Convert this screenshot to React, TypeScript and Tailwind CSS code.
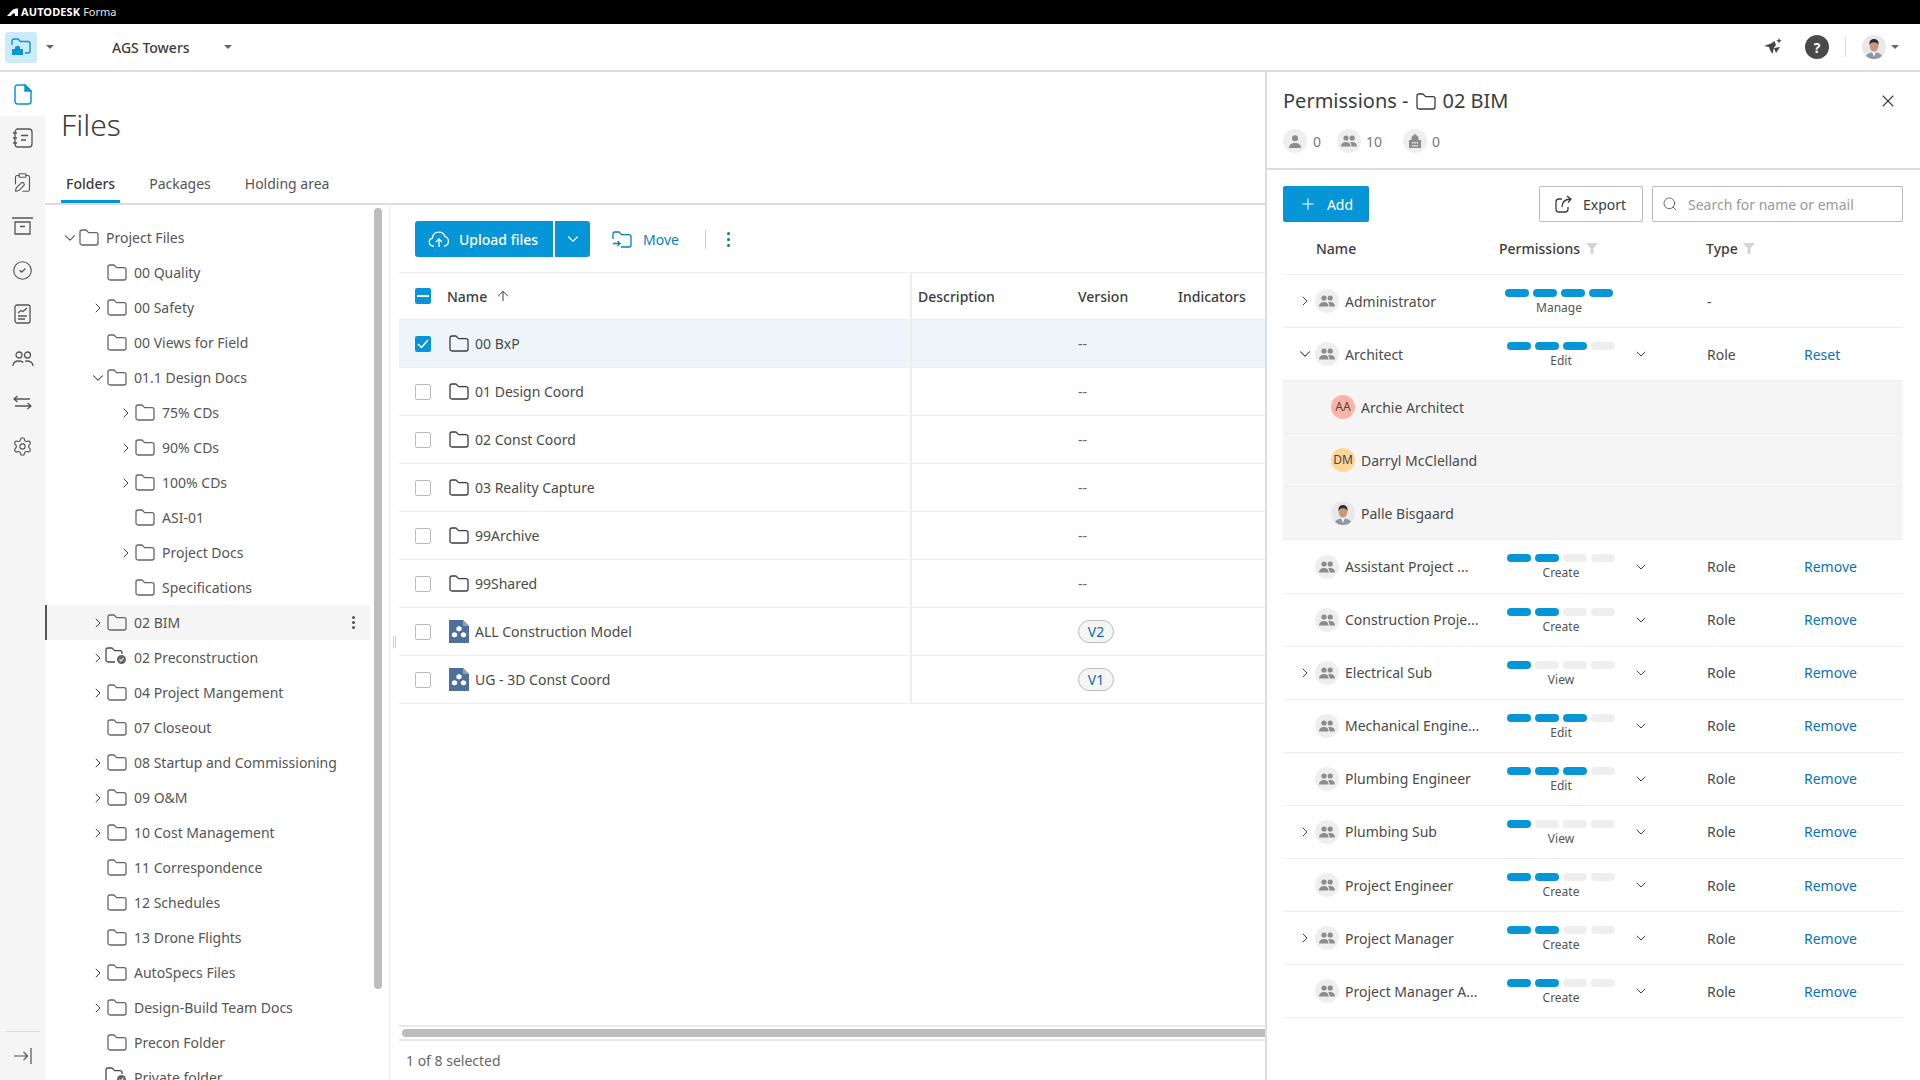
import React from 'react';
import { ChevronRight, ChevronDown, X, Search, Plus, ArrowUp, ClipboardPen, CircleCheck, Settings } from 'lucide-react';

type TreeRow = { name: string; level: number; arrow?: 'right' | 'down'; shared?: boolean; active?: boolean };

const tree: TreeRow[] = [
    { name: 'Project Files', level: 0, arrow: 'down' },
    { name: '00 Quality', level: 1 },
    { name: '00 Safety', level: 1, arrow: 'right' },
    { name: '00 Views for Field', level: 1 },
    { name: '01.1 Design Docs', level: 1, arrow: 'down' },
    { name: '75% CDs', level: 2, arrow: 'right' },
    { name: '90% CDs', level: 2, arrow: 'right' },
    { name: '100% CDs', level: 2, arrow: 'right' },
    { name: 'ASI-01', level: 2 },
    { name: 'Project Docs', level: 2, arrow: 'right' },
    { name: 'Specifications', level: 2 },
    { name: '02 BIM', level: 1, arrow: 'right', active: true },
    { name: '02 Preconstruction', level: 1, arrow: 'right', shared: true },
    { name: '04 Project Mangement', level: 1, arrow: 'right' },
    { name: '07 Closeout', level: 1 },
    { name: '08 Startup and Commissioning', level: 1, arrow: 'right' },
    { name: '09 O&M', level: 1, arrow: 'right' },
    { name: '10 Cost Management', level: 1, arrow: 'right' },
    { name: '11 Correspondence', level: 1 },
    { name: '12 Schedules', level: 1 },
    { name: '13 Drone Flights', level: 1 },
    { name: 'AutoSpecs Files', level: 1, arrow: 'right' },
    { name: 'Design-Build Team Docs', level: 1, arrow: 'right' },
    { name: 'Precon Folder', level: 1 },
    { name: 'Private folder', level: 1, shared: true },
];

const files = [
    { name: '00 BxP', selected: true },
    { name: '01 Design Coord' },
    { name: '02 Const Coord' },
    { name: '03 Reality Capture' },
    { name: '99Archive' },
    { name: '99Shared' },
    { name: 'ALL Construction Model', model: true, version: 'V2' },
    { name: 'UG - 3D Const Coord', model: true, version: 'V1' },
];

const roles = [
    { name: 'Assistant Project ...', level: 2, label: 'Create' },
    { name: 'Construction Proje...', level: 2, label: 'Create' },
    { name: 'Electrical Sub', level: 1, label: 'View', arrow: true },
    { name: 'Mechanical Engine...', level: 3, label: 'Edit' },
    { name: 'Plumbing Engineer', level: 3, label: 'Edit' },
    { name: 'Plumbing Sub', level: 1, label: 'View', arrow: true },
    { name: 'Project Engineer', level: 2, label: 'Create' },
    { name: 'Project Manager', level: 2, label: 'Create', arrow: true },
    { name: 'Project Manager A...', level: 2, label: 'Create' },
];

const FolderIcon = ({ color = '#4a4a4a' }: { color?: string }) => (
    <svg width="20" height="17" viewBox="0 0 20 17" fill="none" stroke={color} strokeWidth="1.3" className="shrink-0">
        <path d="M1 3a2 2 0 0 1 2-2h4l2.6 2.6H17a2 2 0 0 1 2 2V14a2 2 0 0 1-2 2H3a2 2 0 0 1-2-2z" strokeLinejoin="round" />
    </svg>
);

const SharedFolderIcon = () => (
    <svg width="22" height="18" viewBox="0 0 22 18" fill="none" className="shrink-0 -ml-[2px] -mt-[4px]">
        <path d="M10 15H3a2 2 0 0 1-2-2V3a2 2 0 0 1 2-2h4l2.6 2.6H15a2 2 0 0 1 2 2V7" stroke="#4a4a4a" strokeWidth="1.3" strokeLinejoin="round" />
        <circle cx="16.5" cy="12.5" r="4.5" fill="#666" />
        <path d="M14.5 12.5l1.5 1.5 2.5-3" stroke="#fff" strokeWidth="1.1" />
    </svg>
);

const ModelIcon = () => (
    <svg width="20" height="23" viewBox="0 0 20 23" className="shrink-0">
        <path d="M0 0h14l6 6v17H0z" fill="#4f7099" />
        <path d="M14 0l6 6h-6z" fill="#8ba3bf" />
        <path d="M10 6l2.6 1.4v2.8L10 11.6 7.4 10.2V7.4z M5.5 12l2.6 1.4v2.8L5.5 17.600 2.900 16.200v-2.800z M14.500 12l2.600 1.400v2.800l-2.600 1.400-2.600-1.400v-2.800z" fill="#fff" />
    </svg>
);

const GroupGlyph = () => (
    <svg width="16" height="12" viewBox="0 0 16 12" fill="#8c8c8c">
        <circle cx="5" cy="3" r="2.600" />
        <circle cx="11.200" cy="3" r="2.600" />
        <path d="M0 11.500c0-3 2-4.500 5-4.500s4.500 1.500 4.500 4.500z" />
        <path d="M10.500 11.500c0-1.800-.5-3.200-1.500-4.200.6-.2 1.300-.3 2.100-.3 3 0 4.900 1.500 4.900 4.500z" />
    </svg>
);

const GroupCircle = () => (
    <span className="w-[24px] h-[24px] rounded-full bg-[#eeeeee] flex items-center justify-center shrink-0">
        <GroupGlyph />
    </span>
);

const PhotoAvatar = ({ size }: { size: number }) => (
    <svg width={size} height={size} viewBox="0 0 24 24" className="shrink-0 rounded-full">
        <rect width="24" height="24" fill="#e6e8ec" />
        <path d="M3 24c.6-5 4-6.500 9-6.500s8.400 1.500 9 6.500z" fill="#8d97a6" />
        <path d="M10 17h4l-2 5z" fill="#f4f4f4" />
        <ellipse cx="12" cy="11" rx="4.300" ry="5.500" fill="#c99678" />
        <path d="M7.500 10c-.5-4 1.500-6 4.500-6s5 2 4.500 6c-1-2-2-2.800-4.500-2.800S8.500 8 7.500 10z" fill="#2c2a2a" />
    </svg>
);

const Bars = ({ level }: { level: number }) => (
    <div className="flex gap-[4px]">
        {[1, 2, 3, 4].map(n => (
            <span key={n} className={`w-[24px] h-[8px] rounded-full ${n <= level ? 'bg-[#0696d7]' : 'bg-[#eeeeee]'}`} />
        ))}
    </div>
);

const FunnelIcon = () => (
    <svg width="12" height="11" viewBox="0 0 12 11" fill="#d4d4d4" className="shrink-0">
        <path d="M0 0h12L7.500 5.500V11L4.500 11V5.500z" />
    </svg>
);

const PermRow = ({ name, level, label, arrow, open, action = 'Remove' }: { name: string; level: number; label: string; arrow?: boolean; open?: boolean; action?: string }) => (
    <div className="h-[53.1px] flex items-center border-b border-[#eeeeee] text-[14px] text-[#4a4a4a]">
        <div className="w-[32px] pl-[16px] flex items-center shrink-0 text-[#333]">
            {arrow && <ChevronRight size={16} strokeWidth={1.4} className="-ml-[2px]" />}
            {open && <ChevronDown size={18} strokeWidth={1.4} className="-ml-[3px]" />}
        </div>
        <GroupCircle />
        <span className="ml-[6px] w-[162px] shrink-0 whitespace-nowrap">{name}</span>
        <div className="w-[108px] h-full pt-[14px] flex flex-col items-center shrink-0">
            <Bars level={level} />
            <span className="mt-[3px] text-[12px] leading-[16px] text-[#555]">{label}</span>
        </div>
        <div className="w-[92px] pl-[18px] shrink-0 text-[#333]">
            <ChevronDown size={16} strokeWidth={1.4} />
        </div>
        <span className="w-[97px] shrink-0">Role</span>
        <span className="text-[#0a72b5]">{action}</span>
    </div>
);

const UserRow = ({ name, avatar }: { name: string; avatar: React.ReactNode }) => (
    <div className="h-[53.1px] flex items-center bg-[#f5f5f5] border-b border-[#eeeeee] pl-[48px] text-[14px] text-[#4a4a4a]">
        {avatar}
        <span className="ml-[6px]">{name}</span>
    </div>
);

const RailIcon = ({ children }: { children: React.ReactNode }) => (
    <div className="h-[44.100px] flex items-center justify-center text-[#555]">{children}</div>
);

export default function App() {
    return (
        <div className="w-[1920px] h-[1080px] overflow-hidden flex flex-col bg-white text-[#4a4a4a] font-['Noto_Sans','Open_Sans',sans-serif]">
            {/* black brand strip */}
            <div className="h-[24px] bg-black flex items-center pl-[7px] shrink-0">
                <svg width="11" height="8" viewBox="0 0 11 8" fill="#fff"><path d="M0 8 5 2.500C6.500 1 8 .5 11 .5V8H8V5.500H6L3.500 8z" /></svg>
                <span className="ml-[3px] text-[11px] font-bold text-white tracking-[0.1px]">AUTODESK</span>
                <span className="ml-[3px] text-[11px] text-[#e5e5e5]">Forma</span>
            </div>

            {/* project header */}
            <div className="h-[48px] shrink-0 border-b-2 border-[#dddddd] flex items-center pl-[5px] pr-[21px]">
                <div className="w-[32px] h-[31px] rounded-[3px] bg-[#cdeaf8] flex items-center justify-center">
                    <svg width="20" height="18" viewBox="0 0 20 18" fill="none">
                        <path d="M1 7V3a2 2 0 0 1 2-2h4l2.500 2.500H17a2 2 0 0 1 2 2V13a2 2 0 0 1-2 2h-3" stroke="#0696d7" strokeWidth="1.400" />
                        <path d="M1 17v-6h3V9l3-1.500L9 9v2h3v6z" fill="#0696d7" />
                    </svg>
                </div>
                <span className="ml-[9px] w-0 h-0 border-x-[4px] border-x-transparent border-t-[4px] border-t-[#666]" />
                <span className="ml-[58px] text-[14px] font-medium text-[#3c3c3c] w-[112px]">AGS Towers</span>
                <span className="w-0 h-0 border-x-[4px] border-x-transparent border-t-[4px] border-t-[#666]" />
                <div className="ml-auto flex items-center">
                    <svg width="18" height="18" viewBox="0 0 18 18" fill="#444">
                        <path d="M0 8 7 5.500 10.500 3 12 7 10 9.500 8.500 16 6 12 5 9z" />
                        <path d="M10 10 16 9 12 15z" />
                        <path d="M15 0l.8 2 2 .8-2 .8-.8 2-.8-2-2-.8 2-.8z" />
                    </svg>
                    <span className="ml-[23px] w-[24px] h-[24px] rounded-full bg-[#4a4a4a] text-white text-[14px] font-bold flex items-center justify-center">?</span>
                    <span className="ml-[16px] w-px h-[20px] bg-[#dddddd]" />
                    <span className="ml-[16px]"><PhotoAvatar size={24} /></span>
                    <span className="ml-[5px] w-0 h-0 border-x-[4px] border-x-transparent border-t-[4px] border-t-[#666]" />
                </div>
            </div>

            <div className="flex-1 flex min-h-0">
                {/* left rail */}
                <div className="w-[45px] shrink-0 flex flex-col">
                    <div className="h-[44px] flex items-center justify-center">
                        <svg width="18" height="21" viewBox="0 0 18 21" fill="none" stroke="#0696d7" strokeWidth="1.500">
                            <path d="M1 3.500A2.500 2.500 0 0 1 3.500 1H11l6 6v10.500a2.500 2.500 0 0 1-2.500 2.500h-11A2.500 2.500 0 0 1 1 17.500z" strokeLinejoin="round" />
                            <path d="M11 1l6 6h-6z" fill="#0696d7" />
                        </svg>
                    </div>
                    <div className="flex-1 bg-[#f5f5f5] flex flex-col">
                        <RailIcon>
                            <svg width="21" height="20" viewBox="0 0 21 20" fill="none" stroke="currentColor" strokeWidth="1.300">
                                <rect x="3" y="1" width="17" height="18" rx="3" />
                                <path d="M1 5h4M1 10h4M1 15h4M9 7.500h7M9 12h5" />
                            </svg>
                        </RailIcon>
                        <RailIcon><ClipboardPen size={21} strokeWidth={1.300} /></RailIcon>
                        <RailIcon>
                            <svg width="21" height="18" viewBox="0 0 21 18" fill="none" stroke="currentColor" strokeWidth="1.300">
                                <path d="M0 1h21M3 5h15v12H3zM8 9.500h5" />
                            </svg>
                        </RailIcon>
                        <RailIcon><CircleCheck size={21} strokeWidth={1.300} /></RailIcon>
                        <RailIcon>
                            <svg width="17" height="20" viewBox="0 0 17 20" fill="none" stroke="currentColor" strokeWidth="1.300">
                                <rect x="1" y="1" width="15" height="18" rx="2" />
                                <path d="M4 9l3-2.500 2 1L13 4M4 12h9M4 15h7" />
                            </svg>
                        </RailIcon>
                        <RailIcon>
                            <svg width="22" height="16" viewBox="0 0 22 16" fill="none" stroke="currentColor" strokeWidth="1.300">
                                <circle cx="7" cy="4" r="3" />
                                <circle cx="15.500" cy="4" r="3" />
                                <path d="M1 15c0-3.500 2.500-5 6-5 2 0 3.500.5 4.300 1.500M13 10.200c4.500-.8 8 1 8 4.800" />
                            </svg>
                        </RailIcon>
                        <RailIcon>
                            <svg width="19" height="15" viewBox="0 0 19 15" fill="none" stroke="currentColor" strokeWidth="1.300">
                                <path d="M4.500 1 1 4l3.500 3M1 4h16M14.500 8l3.500 3-3.500 3M18 11H2" />
                            </svg>
                        </RailIcon>
                        <RailIcon><Settings size={21} strokeWidth={1.300} /></RailIcon>
                        <div className="mt-auto mx-[5px] h-px bg-[#dddddd]" />
                        <div className="h-[48px] flex items-center justify-center text-[#555] mb-[0px]">
                            <svg width="18" height="16" viewBox="0 0 18 16" fill="none" stroke="currentColor" strokeWidth="1.200">
                                <path d="M0 8h13M9.500 4l4 4-4 4M17 0v16" />
                            </svg>
                        </div>
                    </div>
                </div>

                {/* files area */}
                <div className="w-[1220px] shrink-0 flex flex-col min-h-0">
                    <div className="h-[133px] shrink-0 border-b-2 border-[#dddddd] flex flex-col pl-[16px]">
                        <h1 className="mt-[32px] h-[42px] leading-[42px] text-[30px] font-light text-[#3c3c3c]">Files</h1>
                        <div className="mt-auto flex gap-[24px] text-[14px]">
                            <span className="px-[5px] pb-[5px] h-[31px] leading-[24px] font-medium text-[#3c3c3c] border-b-[3px] border-[#0696d7]">Folders</span>
                            <span className="px-[5px] leading-[24px] text-[#555]">Packages</span>
                            <span className="px-[5px] leading-[24px] text-[#555]">Holding area</span>
                        </div>
                    </div>
                    <div className="flex-1 flex min-h-0">
                        {/* folder tree */}
                        <div className="w-[325px] shrink-0 pt-[15px] overflow-hidden">
                            {tree.map(row => (
                                <div key={row.name} className={`h-[35px] flex items-center text-[14px] text-[#555] ${row.active ? 'bg-[#f5f5f5] border-l-2 border-[#555]' : ''}`}>
                                    <div className={`relative h-full shrink-0 ${row.level === 0 ? 'w-[34px]' : row.level === 1 ? 'w-[62px]' : 'w-[90px]'} ${row.active ? '-ml-[2px]' : ''}`}>
                                        {row.arrow === 'right' && <ChevronRight size={16} strokeWidth={1.400} className="absolute right-[1px] top-[10px] text-[#333]" />}
                                        {row.arrow === 'down' && <ChevronDown size={18} strokeWidth={1.400} className="absolute right-[0px] top-[9px] text-[#333]" />}
                                    </div>
                                    {row.shared ? <SharedFolderIcon /> : <FolderIcon color="#666" />}
                                    <span className={`ml-[7px] whitespace-nowrap ${row.shared ? '-ml-[0px]' : ''}`}>{row.name}</span>
                                    {row.active && (
                                        <span className="ml-auto mr-[15px] flex flex-col gap-[2px]">
                                            <i className="w-[3px] h-[3px] rounded-full bg-[#555]" />
                                            <i className="w-[3px] h-[3px] rounded-full bg-[#555]" />
                                            <i className="w-[3px] h-[3px] rounded-full bg-[#555]" />
                                        </span>
                                    )}
                                </div>
                            ))}
                        </div>
                        {/* tree scrollbar */}
                        <div className="w-[15px] shrink-0 pl-[4px] pt-[3px] border-r border-[#eeeeee] box-content">
                            <div className="w-[8px] h-[781px] rounded-full bg-[#bdbdbd]" />
                        </div>

                        {/* table */}
                        <div className="relative flex-1 min-w-0 pl-[9px] flex flex-col">
                            <div className="absolute left-[3px] top-[431px] flex gap-[1px]">
                                <i className="w-[1px] h-[12px] bg-[#cccccc]" />
                                <i className="w-[1px] h-[12px] bg-[#cccccc]" />
                            </div>
                            <div className="h-[67px] shrink-0 pt-[16px] pl-[16px] flex items-start">
                                <div className="h-[36px] w-[138px] rounded-l-[3px] bg-[#0696d7] text-white text-[14px] font-medium flex items-center pl-[13px]">
                                    <svg width="22" height="17" viewBox="0 0 22 17" fill="none" stroke="#fff" strokeWidth="1.300">
                                        <path d="M6 15H5a4 4 0 0 1-.6-7.900A6.500 6.500 0 0 1 17 5.500a5 5 0 0 1 0 9.500h-1" />
                                        <path d="M11 16V8M8 11l3-3 3 3" />
                                    </svg>
                                    <span className="ml-[9px]">Upload files</span>
                                </div>
                                <div className="ml-[2px] h-[36px] w-[35px] rounded-r-[3px] bg-[#0696d7] text-white flex items-center justify-center">
                                    <ChevronDown size={18} strokeWidth={1.500} />
                                </div>
                                <div className="ml-[22px] h-[36px] flex items-center text-[#0a7cc4] text-[14px]">
                                    <svg width="20" height="17" viewBox="0 0 20 17" fill="none" stroke="currentColor" strokeWidth="1.300">
                                        <path d="M1 8V3a2 2 0 0 1 2-2h4l2.600 2.600H17a2 2 0 0 1 2 2V14a2 2 0 0 1-2 2H9M1 12.500h7M5.500 10l2.500 2.500L5.500 15" />
                                    </svg>
                                    <span className="ml-[11px]">Move</span>
                                    <span className="ml-[26px] w-px h-[19px] bg-[#cccccc]" />
                                    <span className="ml-[21px] flex flex-col gap-[3px]">
                                        <i className="w-[3px] h-[3px] rounded-full bg-[#0a6cc0]" />
                                        <i className="w-[3px] h-[3px] rounded-full bg-[#0a6cc0]" />
                                        <i className="w-[3px] h-[3px] rounded-full bg-[#0a6cc0]" />
                                    </span>
                                </div>
                            </div>
                            {/* table header */}
                            <div className="h-[48px] shrink-0 flex border-y border-[#eeeeee] text-[14px] font-medium text-[#3c3c3c]">
                                <div className="w-[513px] shrink-0 pl-[16px] flex items-center border-r-2 border-[#eeeeee]">
                                    <span className="w-[16px] h-[16px] rounded-[2px] bg-[#0696d7] flex items-center justify-center">
                                        <i className="w-[12px] h-[2px] bg-white" />
                                    </span>
                                    <span className="ml-[16px]">Name</span>
                                    <ArrowUp size={16} strokeWidth={1.500} className="ml-[8px]" />
                                </div>
                                <div className="w-[166px] pl-[6px] shrink-0 flex items-center">Description</div>
                                <div className="w-[100px] shrink-0 flex items-center">Version</div>
                                <div className="flex items-center">Indicators</div>
                            </div>
                            {files.map(f => (
                                <div key={f.name} className={`h-[48px] shrink-0 flex border-b border-[#eeeeee] text-[14px] text-[#4a4a4a] ${f.selected ? 'bg-[#edf5fb]' : ''}`}>
                                    <div className="w-[513px] shrink-0 pl-[16px] flex items-center border-r-2 border-[#eeeeee]">
                                        {f.selected ? (
                                            <span className="w-[16px] h-[16px] rounded-[2px] bg-[#0696d7] flex items-center justify-center">
                                                <svg width="12" height="10" viewBox="0 0 12 10" fill="none" stroke="#fff" strokeWidth="1.500"><path d="M1 5l3.500 3.500L11 1" /></svg>
                                            </span>
                                        ) : (
                                            <span className="w-[16px] h-[16px] rounded-[2px] bg-white border border-[#bbbbbb]" />
                                        )}
                                        <span className="ml-[18px]">{f.model ? <ModelIcon /> : <FolderIcon color="#3c3c3c" />}</span>
                                        <span className="ml-[6px]">{f.name}</span>
                                    </div>
                                    <div className="w-[166px] shrink-0" />
                                    <div className="flex items-center">
                                        {f.version ? (
                                            <span className="w-[36px] h-[23px] rounded-full bg-[#f5f5f5] border border-[#bbbbbb] text-[#0a6cb0] flex items-center justify-center">{f.version}</span>
                                        ) : (
                                            <span className="text-[#666]">--</span>
                                        )}
                                    </div>
                                </div>
                            ))}
                            {/* bottom bar */}
                            <div className="mt-auto h-[16px] shrink-0 border-y-2 border-[#e8e8e8] pl-[3px] pt-[2px] flex">
                                <div className="flex-1 h-[8px] rounded-l-full bg-[#bdbdbd]" />
                            </div>
                            <div className="h-[39px] shrink-0 pl-[7px] flex items-center text-[14px] text-[#666]">1 of 8 selected</div>
                        </div>
                    </div>
                </div>

                {/* permissions panel */}
                <div className="flex-1 min-w-0 border-l-2 border-[#dddddd] flex flex-col">
                    <div className="h-[98px] shrink-0 border-b-2 border-[#dddddd] pl-[16px] pr-[22px] flex flex-col">
                        <div className="mt-[16px] h-[26px] flex items-center text-[20px] text-[#3c3c3c]">
                            <span>Permissions -</span>
                            <span className="ml-[7px]"><FolderIcon color="#3c3c3c" /></span>
                            <span className="ml-[7px]">02 BIM</span>
                            <X size={20} strokeWidth={1.300} className="ml-auto" />
                        </div>
                        <div className="mt-[15px] flex items-center text-[14px] text-[#777]">
                            <span className="w-[24px] h-[24px] rounded-full bg-[#eeeeee] flex items-center justify-center">
                                <svg width="12" height="13" viewBox="0 0 12 13" fill="#8c8c8c"><circle cx="6" cy="3.200" r="3" /><path d="M0 13c0-3.500 2.500-5 6-5s6 1.500 6 5z" /></svg>
                            </span>
                            <span className="ml-[6px] w-[24px]">0</span>
                            <GroupCircle />
                            <span className="ml-[5px] w-[37px]">10</span>
                            <span className="w-[24px] h-[24px] rounded-full bg-[#eeeeee] flex items-center justify-center">
                                <svg width="12" height="14" viewBox="0 0 12 14" fill="#8c8c8c"><path d="M0 14V6h2.500V3L6 0l3.500 3v3H12v8zM3 8v1.500h1.500V8zM5.300 8v1.500h1.500V8zM7.500 8v1.500H9V8zM3 11v1.500h1.500V11zM5.300 11v1.500h1.500V11zM7.500 11v1.500H9V11z" fillRule="evenodd" /></svg>
                            </span>
                            <span className="ml-[5px]">0</span>
                        </div>
                    </div>
                    <div className="pl-[16px] pr-[17px] flex flex-col">
                        <div className="mt-[16px] h-[36px] flex items-stretch">
                            <div className="w-[86px] rounded-[2px] bg-[#0696d7] text-white text-[14px] flex items-center justify-center gap-[10px]">
                                <Plus size={18} strokeWidth={1.400} />
                                <span>Add</span>
                            </div>
                            <div className="ml-auto w-[104px] rounded-[2px] border border-[#bbbbbb] text-[14px] text-[#3c3c3c] flex items-center pl-[15px]">
                                <svg width="18" height="18" viewBox="0 0 18 18" fill="none" stroke="currentColor" strokeWidth="1.300">
                                    <path d="M7 4H4a3 3 0 0 0-3 3v7a3 3 0 0 0 3 3h6a3 3 0 0 0 3-3v-2M7 12c0-5 2.500-7.500 8-8M12 1l4 3-3 3.500" />
                                </svg>
                                <span className="ml-[10px]">Export</span>
                            </div>
                            <div className="ml-[9px] w-[251px] rounded-[2px] border border-[#bbbbbb] flex items-center pl-[9px] text-[14px] text-[#999]">
                                <Search size={16} strokeWidth={1.300} className="text-[#555]" />
                                <span className="ml-[10px]">Search for name or email</span>
                            </div>
                        </div>
                        <div className="h-[53px] flex items-center border-b border-[#eeeeee] text-[14px] font-medium text-[#3c3c3c]">
                            <span className="ml-[33px] w-[183px]">Name</span>
                            <span>Permissions</span>
                            <span className="ml-[6px]"><FunnelIcon /></span>
                            <span className="ml-[108px]">Type</span>
                            <span className="ml-[5px]"><FunnelIcon /></span>
                        </div>

                        <div className="h-[53.100px] flex items-center border-b border-[#eeeeee] text-[14px] text-[#4a4a4a]">
                            <div className="w-[32px] pl-[14px] shrink-0 text-[#333]"><ChevronRight size={16} strokeWidth={1.400} /></div>
                            <GroupCircle />
                            <span className="ml-[6px] w-[162px] shrink-0">Administrator</span>
                            <div className="w-[108px] -ml-[2px] h-full pt-[14px] flex flex-col items-center shrink-0">
                                <Bars level={4} />
                                <span className="mt-[3px] text-[12px] leading-[16px] text-[#555]">Manage</span>
                            </div>
                            <span className="ml-[94px]">-</span>
                        </div>
                        <PermRow name="Architect" level={3} label="Edit" open action="Reset" />
                        <UserRow name="Archie Architect" avatar={<span className="w-[24px] h-[24px] rounded-full bg-[#ffb3a7] text-[#444] text-[12px] flex items-center justify-center">AA</span>} />
                        <UserRow name="Darryl McClelland" avatar={<span className="w-[24px] h-[24px] rounded-full bg-[#ffd699] text-[#444] text-[12px] flex items-center justify-center">DM</span>} />
                        <UserRow name="Palle Bisgaard" avatar={<PhotoAvatar size={24} />} />
                        {roles.map(r => (
                            <PermRow key={r.name} name={r.name} level={r.level} label={r.label} arrow={r.arrow} />
                        ))}
                    </div>
                </div>
            </div>
        </div>
    );
}
